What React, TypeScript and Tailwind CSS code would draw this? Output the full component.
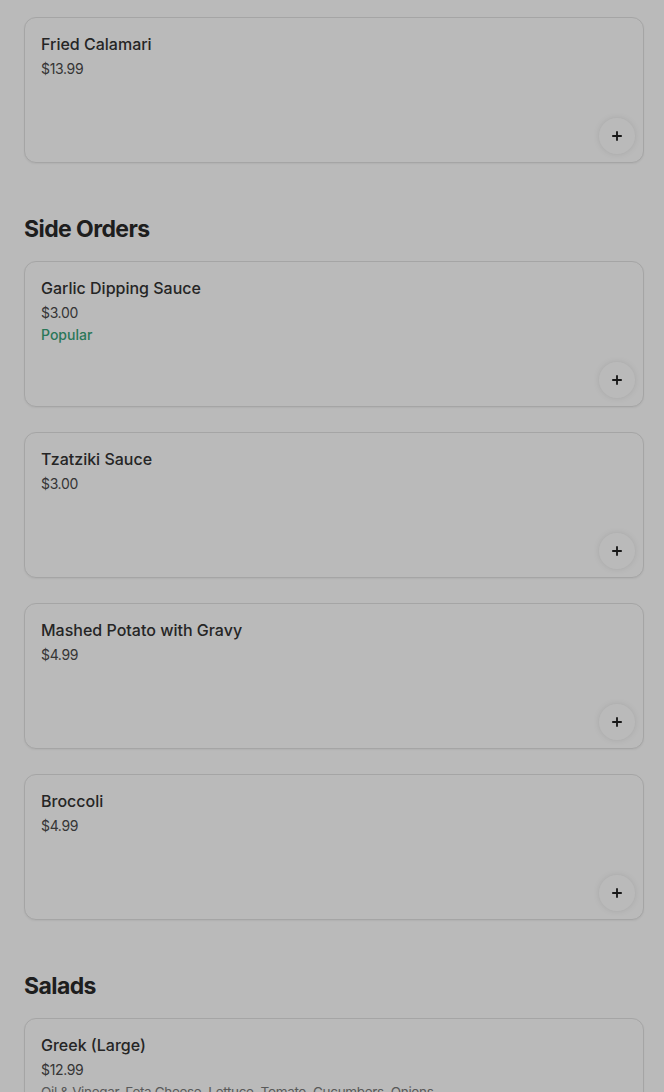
import { Plus } from "lucide-react";

type Item = {
  name: string;
  price: string;
  popular?: boolean;
  description?: string;
};

const sections: { title?: string; items: Item[] }[] = [
  { items: [{ name: "Fried Calamari", price: "$13.99" }] },
  {
    title: "Side Orders",
    items: [
      { name: "Garlic Dipping Sauce", price: "$3.00", popular: true },
      { name: "Tzatziki Sauce", price: "$3.00" },
      { name: "Mashed Potato with Gravy", price: "$4.99" },
      { name: "Broccoli", price: "$4.99" },
    ],
  },
  {
    title: "Salads",
    items: [
      {
        name: "Greek (Large)",
        price: "$12.99",
        description: "Oil & Vinegar, Feta Cheese, Lettuce, Tomato, Cucumbers, Onions",
      },
    ],
  },
];

function ItemCard({ item }: { item: Item }) {
  return (
    <div className="flex h-[146px] flex-col rounded-xl border border-[#e3e3e3] bg-white pl-4 pr-2 pt-4 pb-2 shadow-[0_1px_2px_rgba(0,0,0,0.06)]">
      <p className="-mt-px text-base font-medium leading-[22px] text-[#333]">{item.name}</p>
      <p className="mt-[4px] text-sm leading-5 tracking-tight text-[#4a4a4a]">{item.price}</p>
      {item.popular && (
        <p className="mt-[2px] text-sm font-medium leading-5 text-[#3aa47a]">Popular</p>
      )}
      {item.description && (
        <p className="mt-[2px] truncate pr-40 text-[13.5px] leading-5 tracking-tight text-[#7a7a7a]">
          {item.description}
        </p>
      )}
      <div className="mt-auto flex justify-end">
        <button className="flex h-9 w-9 items-center justify-center rounded-full bg-white shadow-[0_0_6px_rgba(0,0,0,0.1)]">
          <Plus className="h-3.5 w-3.5 text-[#222]" strokeWidth={3.2} />
        </button>
      </div>
    </div>
  );
}

export default function App() {
  return (
    <div className="relative min-h-screen overflow-hidden bg-white font-['Inter',_sans-serif]">
      <div className="pl-6 pr-5 pt-[17px]">
        {sections.map((section, i) => (
          <div key={i} className={i > 0 ? "mt-[50px]" : ""}>
            {section.title && (
              <h2 className="mb-4 text-[23px] font-bold leading-8 tracking-tight text-[#2a2a2a]">
                {section.title}
              </h2>
            )}
            <div className="flex flex-col gap-[25px]">
              {section.items.map((item) => (
                <ItemCard key={item.name} item={item} />
              ))}
            </div>
          </div>
        ))}
      </div>
      {/* modal backdrop */}
      <div className="fixed inset-0 bg-black/[0.27]" />
    </div>
  );
}
